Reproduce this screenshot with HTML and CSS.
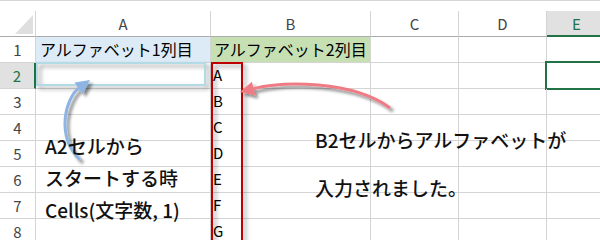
FILE: index.html
```html
<!DOCTYPE html>
<html lang="ja">
<head>
    <meta charset="UTF-8">
    <title>Cells 文字数</title>
    <link rel="stylesheet" href="styles.css">
</head>
<body>

    <div class="sheet">
        <div class="topbar"></div>

        <div class="grid">
            <!-- header row -->
            <div class="corner"><span class="corner-mark"></span></div>
            <div class="colhead">A</div>
            <div class="colhead">B</div>
            <div class="colhead">C</div>
            <div class="colhead">D</div>
            <div class="colhead selected">E</div>

            <!-- row 1 -->
            <div class="rowhead">1</div>
            <div class="cell fill-blue">アルファベット1列目</div>
            <div class="cell fill-green">アルファベット2列目</div>
            <div class="cell"></div>
            <div class="cell"></div>
            <div class="cell"></div>

            <!-- row 2 -->
            <div class="rowhead selected">2</div>
            <div class="cell"><span class="a2-box"></span></div>
            <div class="cell">A</div>
            <div class="cell"></div>
            <div class="cell"></div>
            <div class="cell active"></div>

            <div class="rowhead">3</div>
            <div class="cell"></div>
            <div class="cell">B</div>
            <div class="cell"></div>
            <div class="cell"></div>
            <div class="cell"></div>

            <div class="rowhead">4</div>
            <div class="cell"></div>
            <div class="cell">C</div>
            <div class="cell"></div>
            <div class="cell"></div>
            <div class="cell"></div>

            <div class="rowhead">5</div>
            <div class="cell"></div>
            <div class="cell">D</div>
            <div class="cell"></div>
            <div class="cell"></div>
            <div class="cell"></div>

            <div class="rowhead">6</div>
            <div class="cell"></div>
            <div class="cell">E</div>
            <div class="cell"></div>
            <div class="cell"></div>
            <div class="cell"></div>

            <div class="rowhead">7</div>
            <div class="cell"></div>
            <div class="cell">F</div>
            <div class="cell"></div>
            <div class="cell"></div>
            <div class="cell"></div>

            <div class="rowhead">8</div>
            <div class="cell"></div>
            <div class="cell">G</div>
            <div class="cell"></div>
            <div class="cell"></div>
            <div class="cell"></div>
        </div>

        <!-- shapes drawn on top of the sheet -->
        <div class="b-range"></div>

        <svg class="arrows" width="600" height="240" viewBox="0 0 600 240">
            <defs>
                <filter id="shadow" x="-20%" y="-20%" width="140%" height="140%">
                    <feDropShadow dx="3" dy="3" stdDeviation="1.6" flood-color="#000" flood-opacity="0.45"/>
                </filter>
            </defs>
            <g filter="url(#shadow)">
                <path d="M 80 160 C 55 135, 66 98, 78.7 88.3" class="arrow-blue"/>
                <polygon points="90,80 82.8,94 74.6,82.6" fill="#8db4e2"/>
            </g>
            <g filter="url(#shadow)">
                <path d="M 390 108 C 352 80, 282.6 81.4, 253.6 88.6" class="arrow-red"/>
                <polygon points="240,92 255.3,95.4 251.9,81.8" fill="#ef7b84"/>
            </g>
        </svg>

        <div class="note note-left">
            <div>A2セルから</div>
            <div>スタートする時</div>
            <div>Cells(文字数, 1)</div>
        </div>

        <div class="note note-right">
            <div>B2セルからアルファベットが</div>
            <div>入力されました。</div>
        </div>
    </div>

</body>
</html>
```

FILE: styles.css
```css
body {
    margin: 0;
    padding: 0;
    background-color: #ffffff;
    font-family: "Noto Sans CJK JP", "Noto Sans", sans-serif;
    overflow: hidden;
}
.sheet {
    position: relative;
    width: 600px;
    height: 240px;
    overflow: hidden;
}
.topbar {
    height: 11px;
    box-sizing: border-box;
    border-top: 1px solid #d6d6d6;
}
.grid {
    display: grid;
    grid-template-columns: 36px 175px 160px 88px 88px 60px;
    grid-template-rows: 26px repeat(8, 26px);
}
.grid > div {
    box-sizing: border-box;
    border-right: 1px solid #d4d4d4;
    border-bottom: 1px solid #d4d4d4;
}
.corner {
    display: flex;
    justify-content: flex-end;
    align-items: flex-end;
    padding: 0 2px 2px 0;
    border-bottom-color: #ababab !important;
}
.corner-mark {
    width: 18px;
    height: 19px;
    background-color: #dfdfdf;
    clip-path: polygon(100% 0, 100% 100%, 0 100%);
}
.colhead {
    display: flex;
    justify-content: center;
    align-items: center;
    font-size: 15px;
    color: #444;
    border-bottom-color: #ababab !important;
}
.colhead.selected {
    background-color: #e1e1e1;
    color: #217346;
    border-bottom: 2px solid #217346 !important;
}
.rowhead {
    display: flex;
    justify-content: center;
    align-items: center;
    padding-bottom: 1px;
    font-size: 15px;
    color: #444;
}
.rowhead.selected {
    background-color: #e1e1e1;
    color: #217346;
    border-right: 2px solid #217346 !important;
}
.cell {
    position: relative;
    display: flex;
    align-items: center;
    padding-left: 2px;
    padding-bottom: 2px;
    font-size: 15px;
    color: #000;
}
.fill-blue {
    background-color: #ddebf7;
    font-size: 16px;
    padding-left: 4px;
}
.fill-green {
    background-color: #c6e0b4;
    font-size: 16px;
    padding-left: 3px;
}
.active::after {
    content: "";
    position: absolute;
    top: -2px;
    left: -2px;
    right: -10px;
    bottom: -2px;
    border: 2px solid #217346;
}
.a2-box {
    position: absolute;
    top: -1px;
    left: 0;
    width: 170px;
    height: 24px;
    box-sizing: border-box;
    border: 2px solid #b2dbe6;
    filter: drop-shadow(3px 3px 2px rgba(0, 0, 0, 0.4));
}
.b-range {
    position: absolute;
    left: 211px;
    top: 62px;
    width: 32px;
    height: 190px;
    box-sizing: border-box;
    border: 2px solid #c00000;
    filter: drop-shadow(3px 3px 2px rgba(0, 0, 0, 0.4));
}
.arrows {
    position: absolute;
    top: 0;
    left: 0;
    pointer-events: none;
}
.arrow-blue {
    fill: none;
    stroke: #8db4e2;
    stroke-width: 3;
}
.arrow-red {
    fill: none;
    stroke: #ef7b84;
    stroke-width: 3;
}
.note {
    position: absolute;
    font-size: 19px;
    font-weight: 500;
    color: #111;
    white-space: nowrap;
}
.note-left {
    left: 45px;
    top: 130px;
    line-height: 32px;
}
.note-right {
    left: 315px;
    top: 116px;
    line-height: 48px;
}
```
